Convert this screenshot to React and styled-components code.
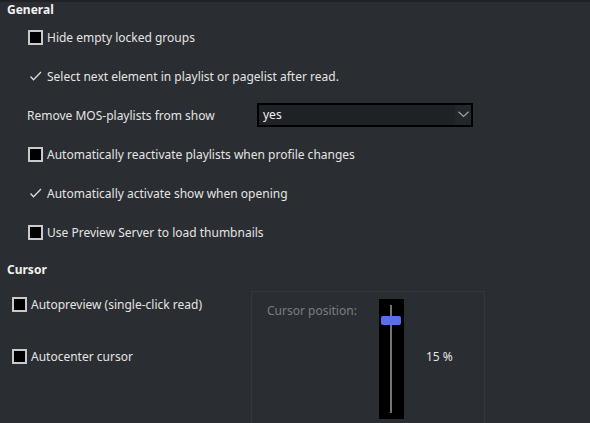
import React from 'react';
import styled, { createGlobalStyle } from 'styled-components';

const GlobalStyle = createGlobalStyle`
  html, body {
    margin: 0;
    padding: 0;
    background: #2a2d31;
  }
  body {
    font-family: "Noto Sans", "Open Sans", sans-serif;
    font-size: 12px;
    color: #e4e4e4;
  }
`;

const Page = styled.div`
  width: 590px;
  height: 423px;
  overflow: hidden;
  background: #2a2d31;
  border-top: 2px solid #1f2124;
  box-sizing: border-box;
`;

const SectionTitle = styled.div`
  font-weight: bold;
  color: #f2f2f2;
  height: 16px;
  line-height: 16px;
  padding-left: 7px;
  margin-top: ${(p) => p.$top || 0}px;
`;

const OptionList = styled.div`
  display: flex;
  flex-direction: column;
  padding-left: 28px;
`;

const Row = styled.div`
  display: flex;
  align-items: center;
  height: 39px;
`;

const Label = styled.span`
  white-space: nowrap;
  color: #e4e4e4;
`;

const Box = styled.span`
  width: 15px;
  height: 15px;
  box-sizing: border-box;
  border: 2px solid #c9c9c9;
  background: #000;
  flex: none;
  margin-right: 4px;
`;

const CheckMark = styled.svg`
  width: 15px;
  height: 15px;
  flex: none;
  margin-right: 4px;
`;

const FieldLabel = styled.span`
  width: 230px;
  margin-left: -1px;
  white-space: nowrap;
`;

const Combo = styled.div`
  width: 216px;
  height: 24px;
  margin-top: -2px;
  box-sizing: border-box;
  border: 2px solid #000;
  background: #1e2125;
  display: flex;
  align-items: center;
`;

const ComboText = styled.span`
  flex: 1;
  padding-left: 4px;
  color: #f0f0f0;
`;

const ComboArrow = styled.span`
  width: 16px;
  height: 100%;
  background: #23262a;
  display: flex;
  align-items: center;
  justify-content: center;
`;

const CursorArea = styled.div`
  display: grid;
  grid-template-columns: 239px 234px;
  padding-left: 12px;
  margin-top: 13px;
`;

const CursorOptions = styled.div`
  display: flex;
  flex-direction: column;
  gap: 26px;
`;

const CursorRow = styled.div`
  display: flex;
  align-items: center;
  height: 26px;
`;

const GroupBox = styled.div`
  border: 1px solid #34373b;
  border-bottom: none;
  height: 140px;
  display: flex;
  align-items: flex-start;
  padding: 7px 0 0 15px;
`;

const GroupLabel = styled.span`
  color: #7b7e82;
  width: 112px;
  margin-top: 3px;
  white-space: nowrap;
`;

const Slider = styled.div`
  position: relative;
  width: 25px;
  height: 120px;
  background: #000;
  flex: none;
`;

const Track = styled.div`
  position: absolute;
  left: 11px;
  top: 6px;
  bottom: 6px;
  width: 2px;
  background: #747474;
`;

const Handle = styled.div`
  position: absolute;
  left: 2px;
  width: 20px;
  height: 9px;
  border-radius: 2px;
  background: #5a6ee8;
`;

const SliderValue = styled.span`
  margin-left: 22px;
  margin-top: 49px;
  color: #e4e4e4;
`;

const Check = () => (
  <CheckMark viewBox="0 0 15 15">
    <polyline points="2.5,7.5 5.5,10.8 13,3" fill="none" stroke="#dcdcdc" strokeWidth="1.3" />
  </CheckMark>
);

const Chevron = () => (
  <svg width="11" height="7" viewBox="0 0 11 7">
    <polyline points="0.5,0.8 5.5,5.5 10.5,0.8" fill="none" stroke="#a0a3a6" strokeWidth="1.2" />
  </svg>
);

const Option = ({ checked, box, children }) => (
  <Row>
    {box ? <Box /> : checked ? <Check /> : null}
    <Label>{children}</Label>
  </Row>
);

const CursorSlider = ({ value }) => {
  const top = Math.round((value / 100) * (120 - 9));
  return (
    <Slider>
      <Track />
      <Handle style={{ top }} />
    </Slider>
  );
};

export default function App() {
  const cursorPos = 15;
  return (
    <>
      <GlobalStyle />
      <Page>
        <SectionTitle>General</SectionTitle>
        <OptionList>
          <Option box>Hide empty locked groups</Option>
          <Option checked>Select next element in playlist or pagelist after read.</Option>
          <Row>
            <FieldLabel>Remove MOS-playlists from show</FieldLabel>
            <Combo>
              <ComboText>yes</ComboText>
              <ComboArrow>
                <Chevron />
              </ComboArrow>
            </Combo>
          </Row>
          <Option box>Automatically reactivate playlists when profile changes</Option>
          <Option checked>Automatically activate show when opening</Option>
          <Option box>Use Preview Server to load thumbnails</Option>
        </OptionList>

        <SectionTitle $top={10}>Cursor</SectionTitle>
        <CursorArea>
          <CursorOptions>
            <CursorRow>
              <Box />
              <Label>Autopreview (single-click read)</Label>
            </CursorRow>
            <CursorRow>
              <Box />
              <Label>Autocenter cursor</Label>
            </CursorRow>
          </CursorOptions>
          <GroupBox>
            <GroupLabel>Cursor position:</GroupLabel>
            <CursorSlider value={cursorPos} />
            <SliderValue>{cursorPos} %</SliderValue>
          </GroupBox>
        </CursorArea>
      </Page>
    </>
  );
}
